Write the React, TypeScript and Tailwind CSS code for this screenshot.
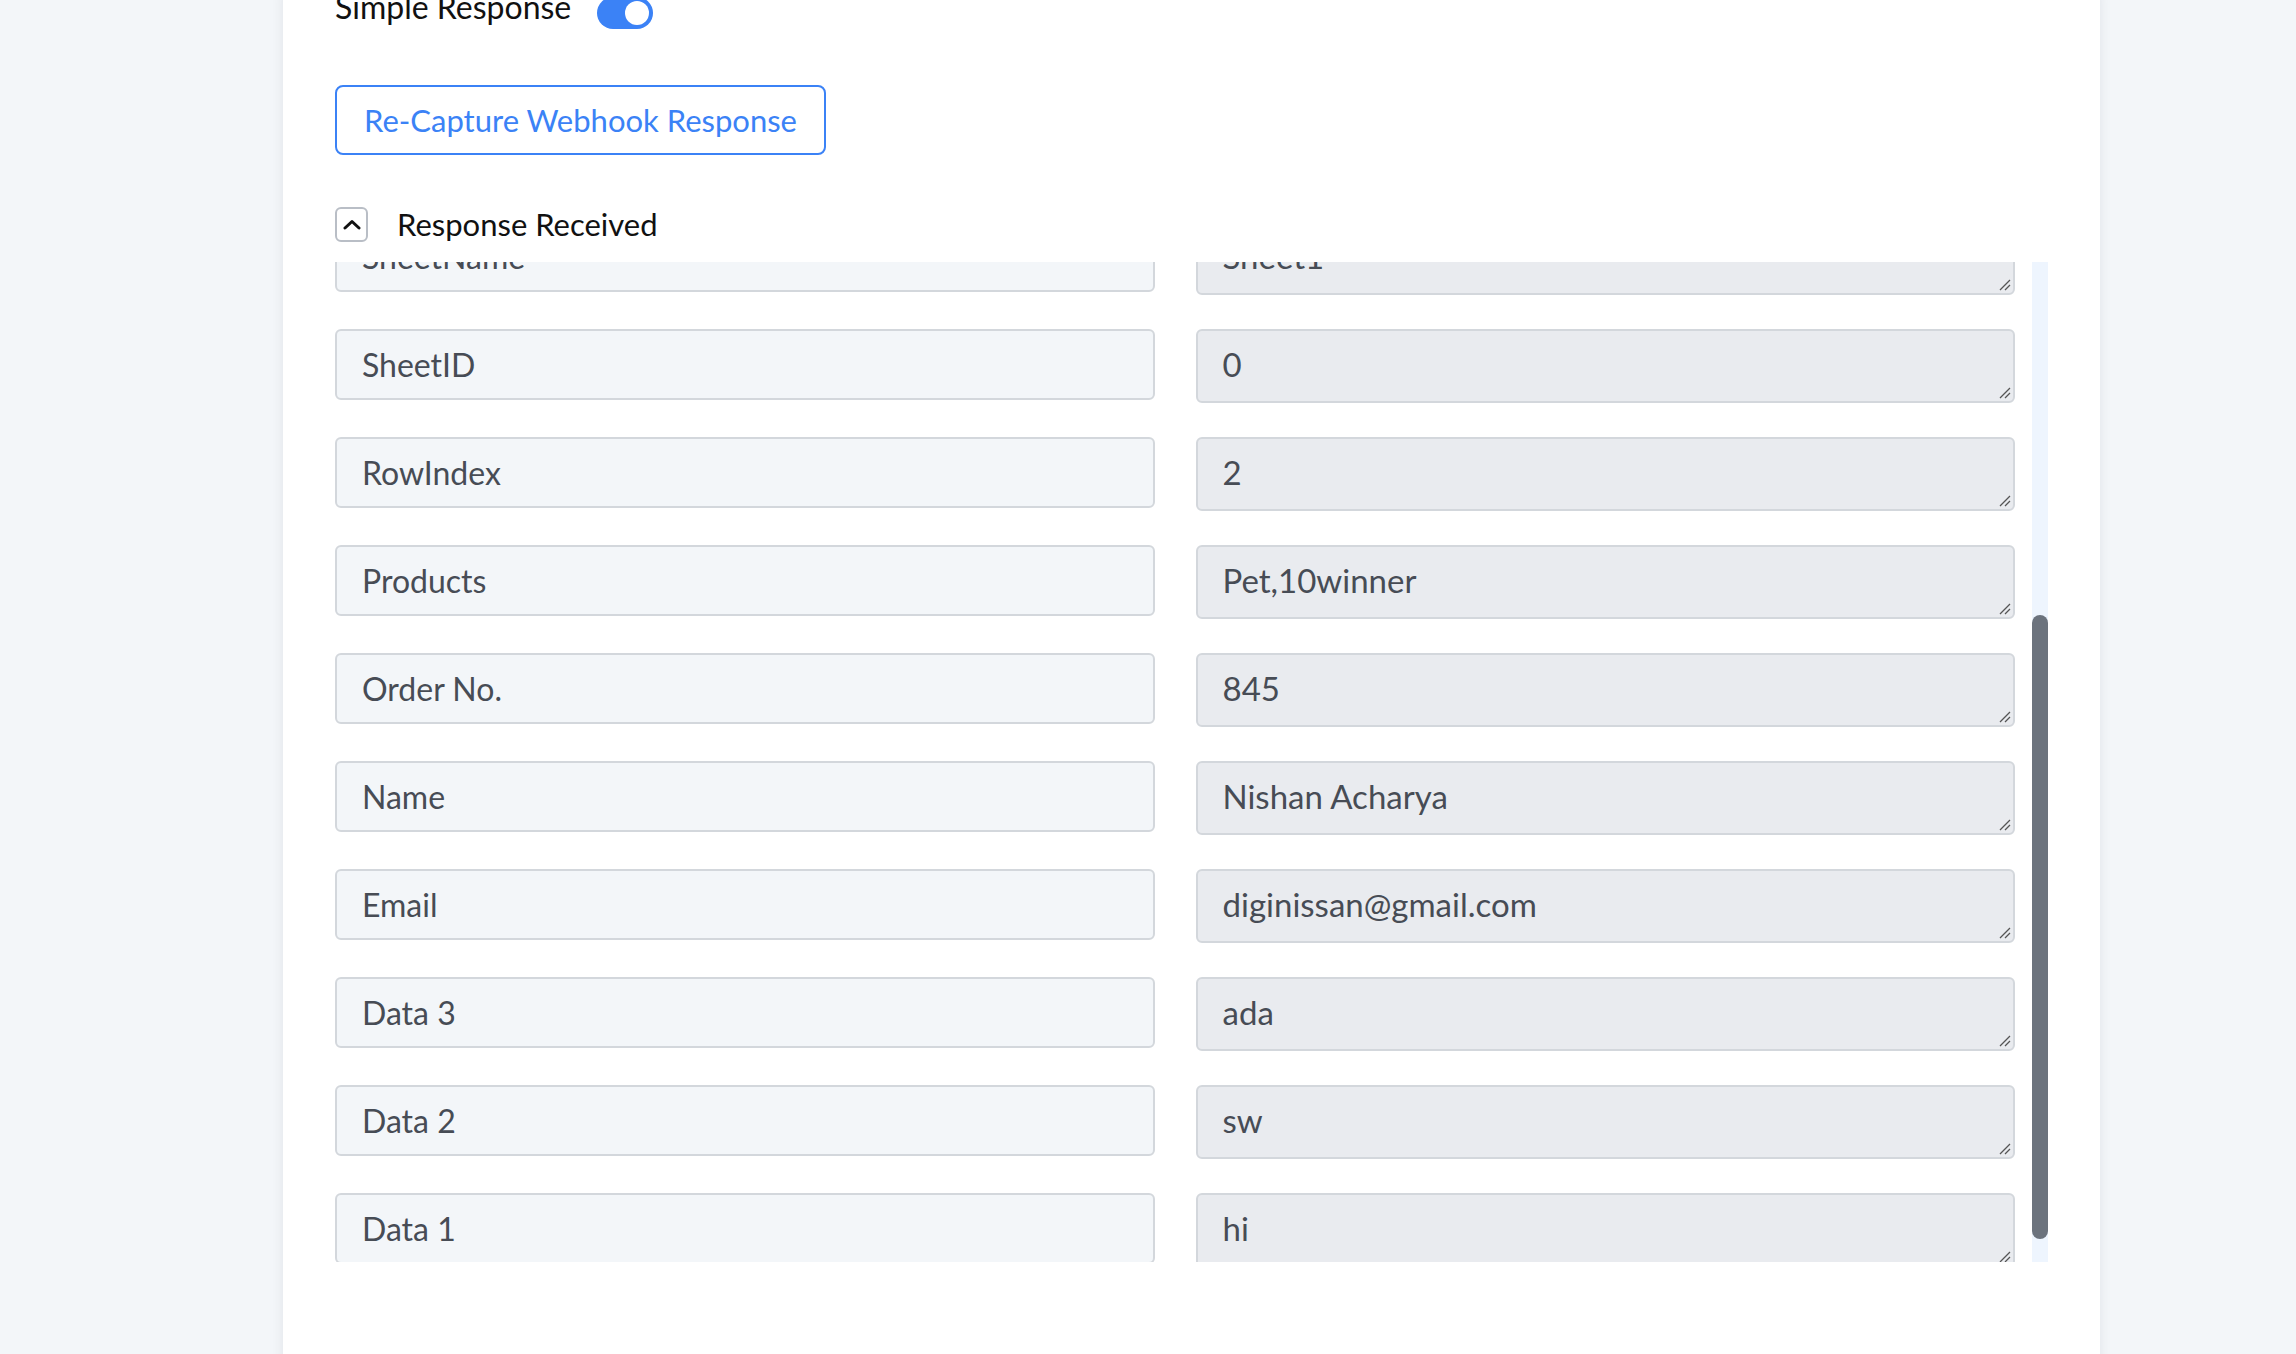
import React, { useEffect, useRef } from "react";

type Field = { key: string; value: string };

// Fields captured from the webhook, in the order they arrived
const fields: Field[] = [
  { key: "SpreadsheetID", value: "1x8QmT2vLkP0aZ" },
  { key: "SpreadsheetName", value: "Orders" },
  { key: "SheetURL", value: "https://docs.google.com/spreadsheets" },
  { key: "EventType", value: "row_added" },
  { key: "Timestamp", value: "2024-03-11" },
  { key: "SheetName", value: "Sheet1" },
  { key: "SheetID", value: "0" },
  { key: "RowIndex", value: "2" },
  { key: "Products", value: "Pet,10winner" },
  { key: "Order No.", value: "845" },
  { key: "Name", value: "Nishan Acharya" },
  { key: "Email", value: "diginissan@gmail.com" },
  { key: "Data 3", value: "ada" },
  { key: "Data 2", value: "sw" },
  { key: "Data 1", value: "hi" },
];

const font = { fontFamily: "Lato, 'Open Sans', sans-serif" };

function Toggle() {
  return (
    <div className="mt-[7px] flex h-[32px] w-[56px] items-center justify-end rounded-full bg-[#3b82f6] px-[4px]">
      <div className="h-[24px] w-[24px] rounded-full bg-white" />
    </div>
  );
}

function FieldRow({ field }: { field: Field }) {
  return (
    <>
      <input
        readOnly
        value={field.key}
        className="h-[71px] w-full rounded-md border-2 border-[#d3d7dc] bg-[#f3f6f9] px-[25px] text-[32px] text-[#474c55] outline-none"
        style={font}
      />
      <div className="relative">
        <textarea
          readOnly
          value={field.value}
          className="block h-[74px] w-full resize-none rounded-md border-2 border-[#d3d7dc] bg-[#e9ebef] px-[25px] pt-[12px] text-[33px] leading-[42px] text-[#474c55] outline-none"
          style={font}
        />
        {/* resize grip */}
        <svg className="absolute bottom-[4px] right-[4px]" width="12" height="12" viewBox="0 0 12 12">
          <path d="M1 11 11 1M6 11 11 6" stroke="#555" strokeWidth="1.3" />
        </svg>
      </div>
    </>
  );
}

export default function App() {
  const listRef = useRef<HTMLDivElement>(null);

  useEffect(() => {
    if (listRef.current) listRef.current.scrollTop = 581;
  }, []);

  return (
    <div className="h-[1354px] overflow-hidden bg-[#f3f6f9]" style={font}>
      <div className="ml-[283px] h-[1420px] w-[1817px] bg-white px-[52px] shadow-[0_0_12px_rgba(15,23,42,0.08)]">
        {/* Simple response switch */}
        <div className="-mt-[10px] flex items-start gap-[26px]">
          <span className="text-[32px] leading-[34px] text-[#111]">Simple Response</span>
          <Toggle />
        </div>

        <button className="mt-[56px] flex h-[70px] w-[491px] items-center justify-center rounded-lg border-2 border-[#3b82f6] text-[31px] text-[#3b82f6]">
          Re-Capture Webhook Response
        </button>

        {/* Collapsible response section */}
        <div className="mt-[52px] flex h-[35px] items-center gap-[29px]">
          <div className="flex h-[35px] w-[33px] items-center justify-center rounded-md border-2 border-[#b9bec6]">
            <svg width="18" height="11" viewBox="0 0 18 11" fill="none">
              <path d="M2 9 9 2.5 16 9" stroke="#111" strokeWidth="3" strokeLinecap="round" strokeLinejoin="round" />
            </svg>
          </div>
          <span className="text-[31px] text-[#111]">Response Received</span>
        </div>

        <div className="mt-[20px] flex h-[1000px]">
          <div ref={listRef} className="flex-1 overflow-hidden pr-[17px]">
            <div className="grid grid-cols-2 gap-x-[41px] gap-y-[34px] pb-[16px]">
              {fields.map((f) => (
                <FieldRow key={f.key} field={f} />
              ))}
            </div>
          </div>
          {/* scrollbar */}
          <div className="w-4 bg-[#eef5fe]">
            <div className="mt-[353px] h-[624px] rounded-full bg-[#6c737d]" />
          </div>
        </div>
      </div>
    </div>
  );
}
